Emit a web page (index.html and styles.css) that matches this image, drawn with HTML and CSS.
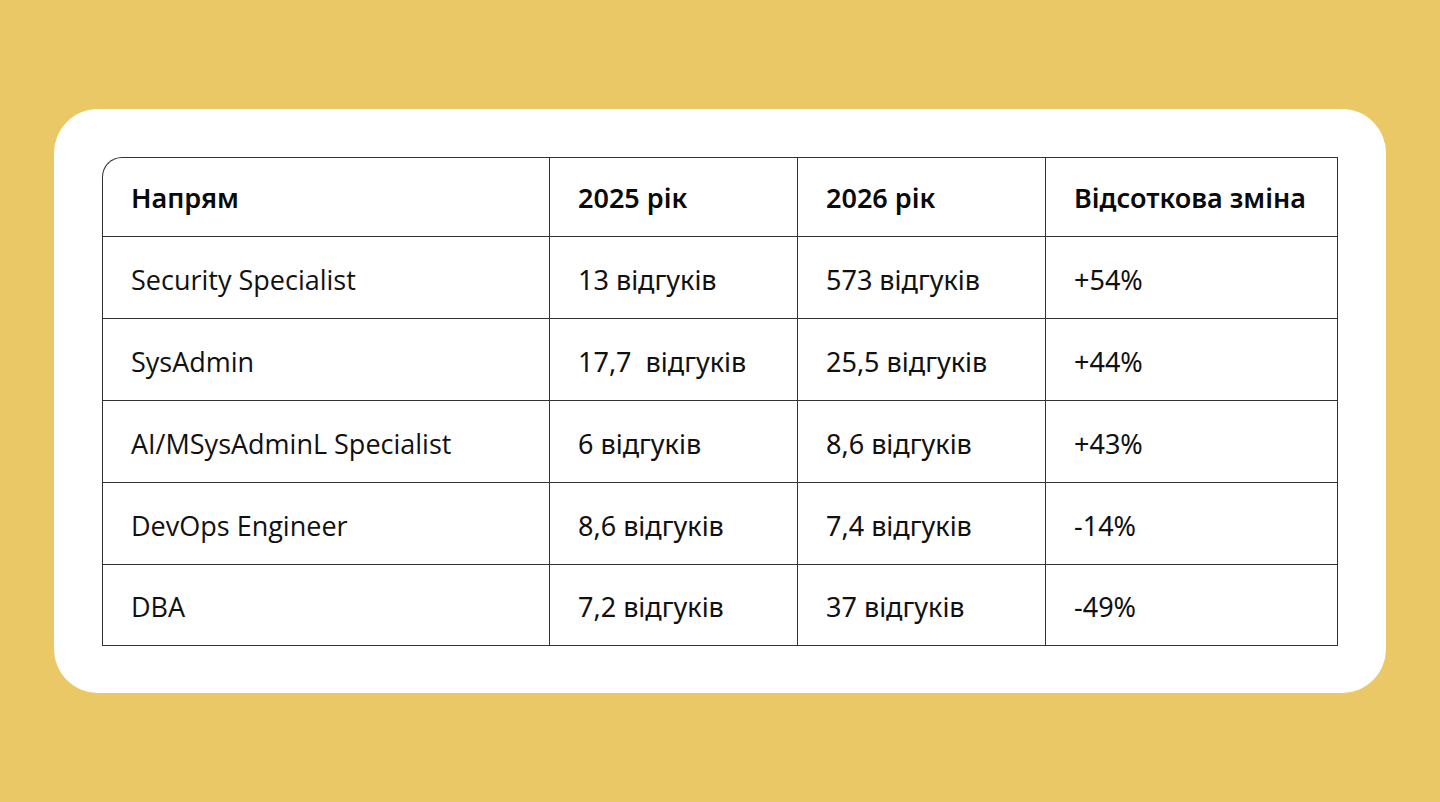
FILE: index.html
```html
<!DOCTYPE html>
<html lang="uk">
<head>
<meta charset="utf-8">
<title>Таблиця</title>
<link rel="stylesheet" href="styles.css">
</head>
<body>
<main class="card">
  <table class="data">
    <thead>
      <tr>
        <th class="c1">Напрям</th>
        <th class="c2">2025 рік</th>
        <th class="c3">2026 рік</th>
        <th class="c4">Відсоткова зміна</th>
      </tr>
    </thead>
    <tbody>
      <tr><td class="name">Security Specialist</td><td>13 відгуків</td><td>573 відгуків</td><td>+54%</td></tr>
      <tr><td class="name">SysAdmin</td><td>17,7&nbsp; відгуків</td><td>25,5 відгуків</td><td>+44%</td></tr>
      <tr><td class="name">AI/MSysAdminL Specialist</td><td>6 відгуків</td><td>8,6 відгуків</td><td>+43%</td></tr>
      <tr><td class="name">DevOps Engineer</td><td>8,6 відгуків</td><td>7,4 відгуків</td><td>-14%</td></tr>
      <tr><td class="name">DBA</td><td>7,2 відгуків</td><td>37 відгуків</td><td>-49%</td></tr>
    </tbody>
  </table>
</main>
</body>
</html>
```

FILE: styles.css
```css
html, body {
  margin: 0;
  padding: 0;
}
body {
  background: #EAC866;
  width: 1440px;
  height: 802px;
  display: flex;
  justify-content: center;
  padding-top: 109px;
  box-sizing: border-box;
  font-family: "Noto Sans", "Open Sans", sans-serif;
  color: #111;
}
.card {
  width: 1332px;
  height: 584px;
  box-sizing: border-box;
  background: #fff;
  border-radius: 44px;
  padding: 48px;
}
.data {
  width: 1236px;
  border-collapse: separate;
  border-spacing: 0;
  table-layout: fixed;
  border-top: 1px solid #333;
  border-left: 1px solid #333;
  border-top-left-radius: 20px;
}
.data th, .data td {
  border-right: 1px solid #333;
  border-bottom: 1px solid #333;
  text-align: left;
  padding: 0 0 0 28px;
  font-size: 27px;
  line-height: 36px;
  white-space: nowrap;
}
.data th {
  height: 77px;
  font-weight: 600;
  color: #0a0a0a;
  padding-top: 1px;
}
.data td {
  height: 77px;
  font-weight: 400;
  padding-top: 4px;
}
.data tbody tr:last-child td {
  height: 76px;
}
.data td.name {
  font-family: "Open Sans", "Noto Sans", sans-serif;
  font-weight: 400;
}
.c1 { width: 418px; border-top-left-radius: 20px; }
.c2 { width: 219px; }
.c3 { width: 219px; }
.c4 { width: 263px; }
```
